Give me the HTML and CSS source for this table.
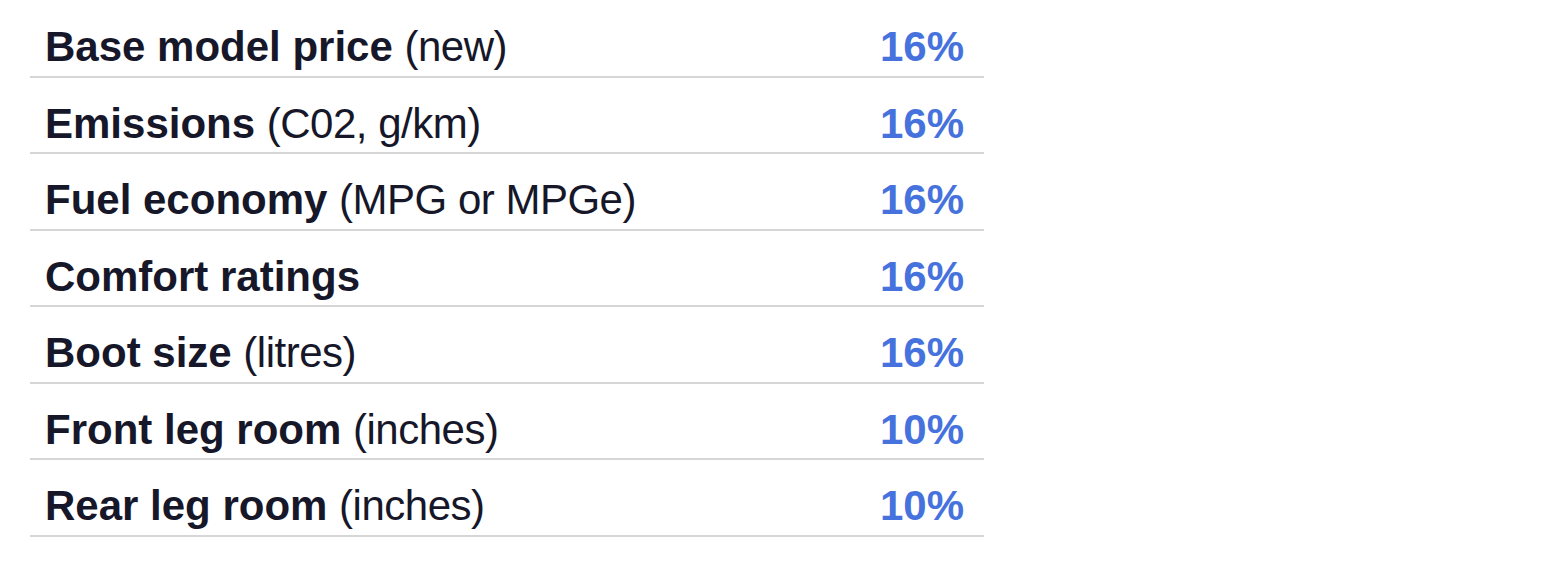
FILE: index.html
```html
<!DOCTYPE html>
<html lang="en">
<head>
<meta charset="utf-8">
<title>Weights</title>
<link rel="stylesheet" href="styles.css">
</head>
<body>
<div class="weights">
  <div class="row"><span class="label"><b>Base model price</b> <span class="unit">(new)</span></span><span class="pct">16%</span></div>
  <div class="row"><span class="label"><b>Emissions</b> <span class="unit">(C02, g/km)</span></span><span class="pct">16%</span></div>
  <div class="row"><span class="label"><b>Fuel economy</b> <span class="unit">(MPG or MPGe)</span></span><span class="pct">16%</span></div>
  <div class="row"><span class="label"><b>Comfort ratings</b></span><span class="pct">16%</span></div>
  <div class="row"><span class="label"><b>Boot size</b> <span class="unit">(litres)</span></span><span class="pct">16%</span></div>
  <div class="row"><span class="label"><b>Front leg room</b> <span class="unit">(inches)</span></span><span class="pct">10%</span></div>
  <div class="row"><span class="label"><b>Rear leg room</b> <span class="unit">(inches)</span></span><span class="pct">10%</span></div>
</div>
</body>
</html>
```
FILE: styles.css
```css
html, body {
  margin: 0;
  padding: 0;
  background: #ffffff;
}
body {
  font-family: "Liberation Sans", Arial, sans-serif;
  color: #17172a;
}
.weights {
  width: 954px;
  margin-left: 30px;
  padding-top: 1px;
}
.row {
  display: flex;
  justify-content: space-between;
  align-items: baseline;
  padding: 23px 20px 5.5px 15px;
  line-height: 46px;
  font-size: 42px;
  border-bottom: 2px solid #d6d6d6;
}
.label b {
  font-weight: 700;
}
.unit {
  letter-spacing: -0.5px;
}
.pct {
  font-weight: 700;
  color: #4672de;
}
```
